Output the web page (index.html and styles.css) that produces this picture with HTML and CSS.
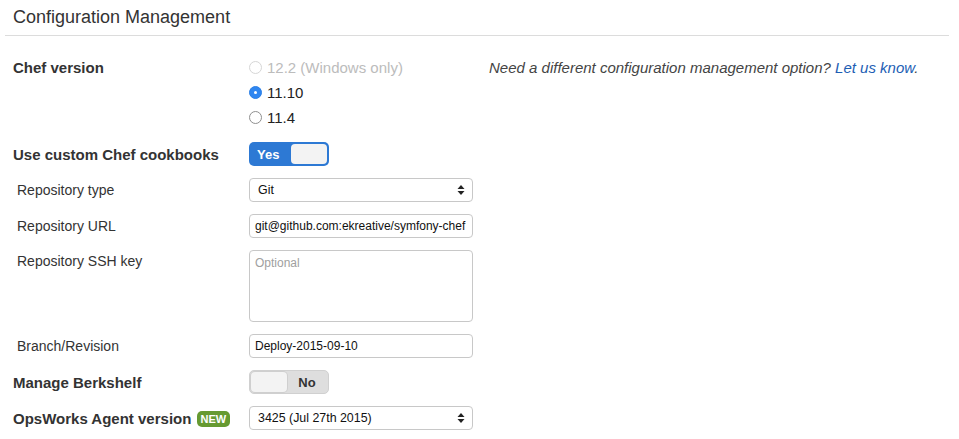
FILE: index.html
```html
<!DOCTYPE html>
<html>
<head>
<meta charset="utf-8">
<link rel="stylesheet" href="styles.css">
</head>
<body>
<div class="header"><h1>Configuration Management</h1></div>
<div class="form">
  <div class="row row-radio">
    <div class="label bold">Chef version</div>
    <div class="control radios">
      <label class="radio disabled"><span class="dot"></span>12.2 (Windows only)</label>
      <label class="radio checked"><span class="dot"></span>11.10</label>
      <label class="radio"><span class="dot"></span>11.4</label>
    </div>
    <div class="help">Need a different configuration management option? <a href="#">Let us know</a>.</div>
  </div>
  <div class="row">
    <div class="label bold">Use custom Chef cookbooks</div>
    <div class="control"><div class="toggle on"><span class="tlabel">Yes</span><span class="knob"></span></div></div>
  </div>
  <div class="row">
    <div class="label sub">Repository type</div>
    <div class="control"><div class="select"><span>Git</span><svg width="8" height="12" viewBox="0 0 8 12"><path d="M4 1 L7.5 5 H0.5 Z M4 11 L7.5 7 H0.5 Z" fill="#222"/></svg></div></div>
  </div>
  <div class="row">
    <div class="label sub">Repository URL</div>
    <div class="control"><div class="input">git@github.com:ekreative/symfony-chef</div></div>
  </div>
  <div class="row row-top">
    <div class="label sub">Repository SSH key</div>
    <div class="control"><div class="textarea">Optional</div></div>
  </div>
  <div class="row">
    <div class="label sub">Branch/Revision</div>
    <div class="control"><div class="input">Deploy-2015-09-10</div></div>
  </div>
  <div class="row">
    <div class="label bold">Manage Berkshelf</div>
    <div class="control"><div class="toggle off"><span class="knob"></span><span class="tlabel">No</span></div></div>
  </div>
  <div class="row">
    <div class="label bold">OpsWorks Agent version <span class="badge">NEW</span></div>
    <div class="control"><div class="select"><span>3425 (Jul 27th 2015)</span><svg width="8" height="12" viewBox="0 0 8 12"><path d="M4 1 L7.5 5 H0.5 Z M4 11 L7.5 7 H0.5 Z" fill="#222"/></svg></div></div>
  </div>
</div>
</body>
</html>
```

FILE: styles.css
```css
* { box-sizing: border-box; }
body {
  margin: 0;
  background: #fff;
  font-family: "Liberation Sans", Arial, sans-serif;
  font-size: 14px;
  color: #222;
}
.header {
  margin: 0 10px 0 5px;
  padding: 5px 8px 6px;
  border-bottom: 1px solid #dcdcdc;
}
.header h1 {
  margin: 0;
  font-size: 18px;
  font-weight: normal;
  line-height: 24px;
  color: #333;
}
.form {
  padding: 19px 0 0 13px;
  display: flex;
  flex-direction: column;
  gap: 12px;
}
.row {
  display: grid;
  grid-template-columns: 236px 224px auto;
  align-items: center;
}
.row-radio { align-items: start; gap: 0; }
.row-radio .label { line-height: 25px; }
.row-top { align-items: start; }
.row-top .label { padding-top: 3px; }
.label { color: #333; white-space: nowrap; }
.label.bold { font-weight: bold; font-size: 15px; color: #333; }
.label.sub { padding-left: 4px; color: #333; }
.radios { display: flex; flex-direction: column; }
.radio {
  display: flex;
  align-items: center;
  height: 25px;
  gap: 5px;
  font-size: 15px;
  color: #222;
}
.radio .dot {
  width: 13px;
  height: 13px;
  border-radius: 50%;
  border: 1px solid #8f8f8f;
  background: #fff;
  display: inline-block;
  position: relative;
  flex: none;
}
.radio.disabled { color: #bcbcbc; }
.radio.disabled .dot { border-color: #d6d6d6; }
.radio.checked .dot { background: #2f86f0; border-color: #2a7fe6; }
.radio.checked .dot::after {
  content: "";
  position: absolute;
  left: 4px;
  top: 4px;
  width: 3px;
  height: 3px;
  border-radius: 50%;
  background: #fff;
}
.help {
  margin-left: 16px;
  line-height: 25px;
  font-size: 15px;
  font-style: italic;
  color: #444;
  white-space: nowrap;
}
.help a { color: #1d5eb4; text-decoration: none; }
.toggle {
  width: 80px;
  height: 24px;
  border-radius: 5px;
  display: flex;
  align-items: center;
  padding: 2px;
  font-size: 13px;
  font-weight: bold;
}
.toggle .knob {
  width: 36px;
  height: 20px;
  border-radius: 4px;
  background: #f3f3f3;
  flex: none;
}
.toggle .tlabel { flex: 1; text-align: center; }
.toggle.on { background: #2d79d4; color: #fff; }
.toggle.on .tlabel { text-align: left; padding-left: 6px; }
.toggle.off { background: #dedede; color: #333; border: 1px solid #d0d0d0; padding: 1px; }
.toggle.off .knob { box-shadow: 0 0 0 1px #cfcfcf; }
.select, .input, .textarea {
  width: 224px;
  border: 1px solid #c8c8c8;
  border-radius: 4px;
  background: #fff;
  font-size: 12px;
  color: #111;
}
.select {
  height: 24px;
  display: flex;
  align-items: center;
  justify-content: space-between;
  padding: 0 7px 0 8px;
  font-size: 12.4px;
}
.input {
  height: 24px;
  display: flex;
  align-items: center;
  padding: 0 5px;
  white-space: nowrap;
  overflow: hidden;
}
.textarea {
  height: 72px;
  padding: 5px 5px;
  color: #a0a0a0;
}
.badge {
  display: inline-block;
  background: #669a31;
  color: #fff;
  font-size: 11px;
  font-weight: bold;
  line-height: 16px;
  padding: 0 4px;
  border-radius: 5px;
  margin-left: 1px;
  vertical-align: 1px;
}
```
